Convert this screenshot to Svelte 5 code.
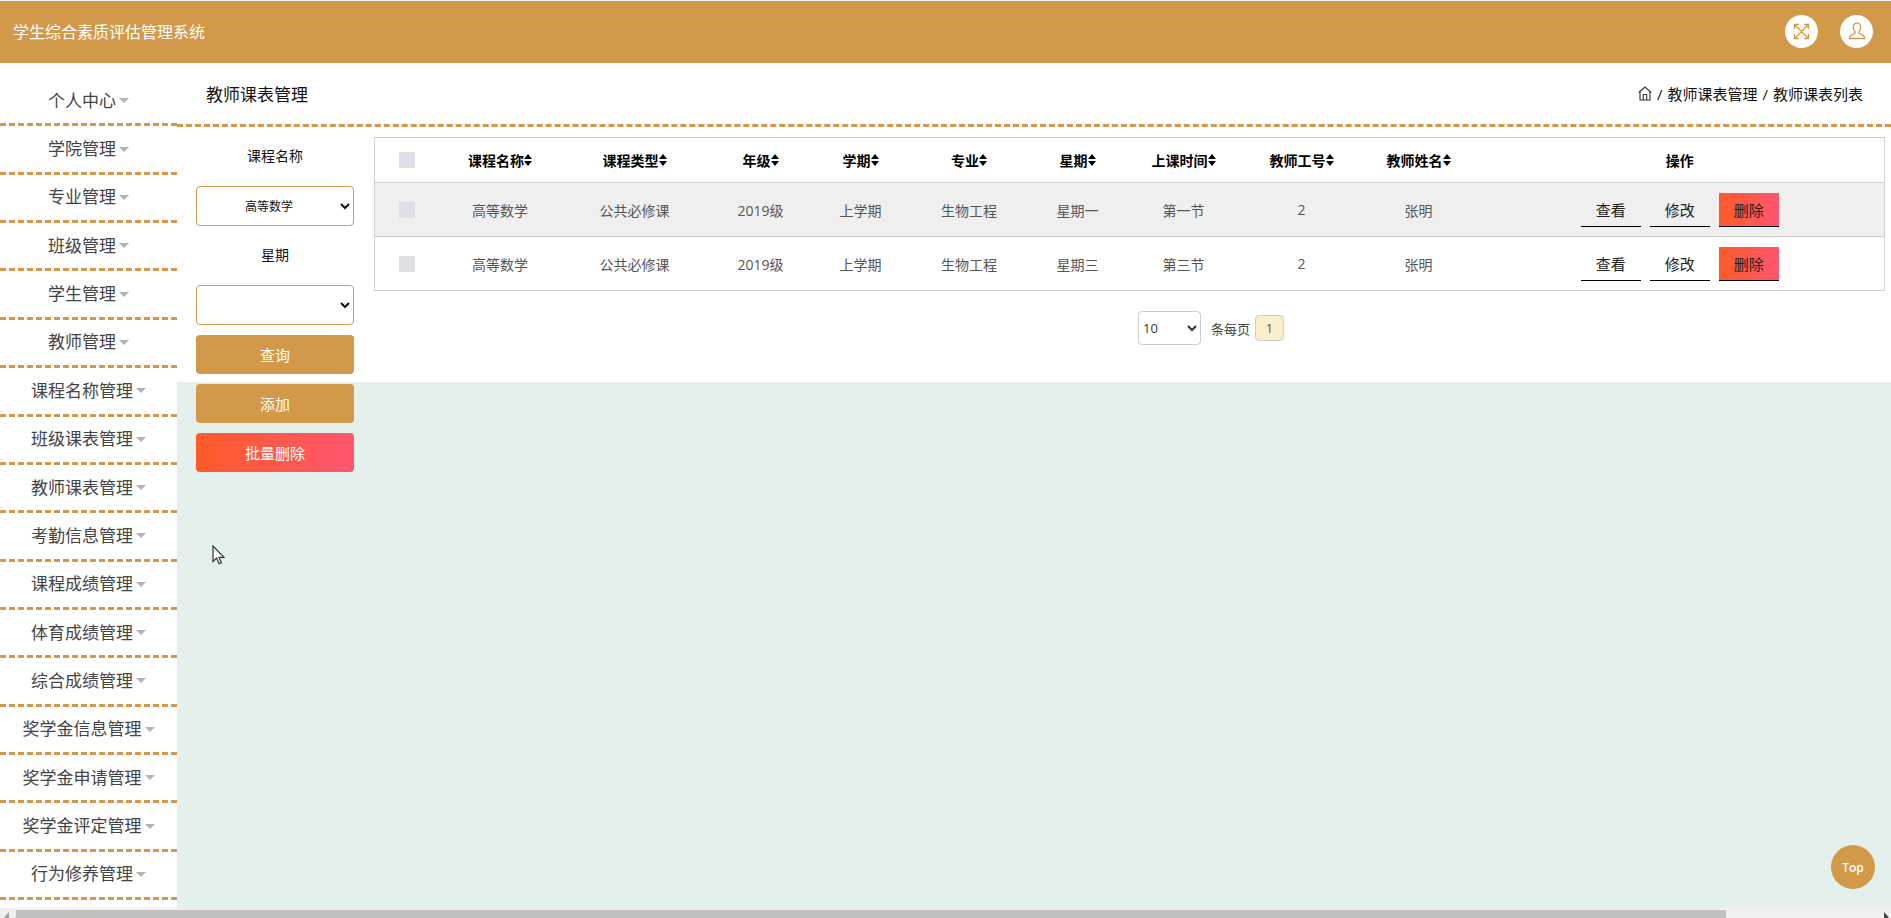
<script>
  const menus = [
    "个人中心",
    "学院管理",
    "专业管理",
    "班级管理",
    "学生管理",
    "教师管理",
    "课程名称管理",
    "班级课表管理",
    "教师课表管理",
    "考勤信息管理",
    "课程成绩管理",
    "体育成绩管理",
    "综合成绩管理",
    "奖学金信息管理",
    "奖学金申请管理",
    "奖学金评定管理",
    "行为修养管理",
  ];

  const columns = [
    { key: "course", title: "课程名称" },
    { key: "type", title: "课程类型" },
    { key: "grade", title: "年级" },
    { key: "term", title: "学期" },
    { key: "major", title: "专业" },
    { key: "weekday", title: "星期" },
    { key: "period", title: "上课时间" },
    { key: "teacherNo", title: "教师工号" },
    { key: "teacher", title: "教师姓名" },
  ];

  const base = {
    course: "高等数学",
    type: "公共必修课",
    grade: "2019级",
    term: "上学期",
    major: "生物工程",
    teacherNo: 2,
    teacher: "张明",
  };

  let rows = [
    { ...base, id: 1, weekday: "星期一", period: "第一节", checked: false },
    { ...base, id: 2, weekday: "星期三", period: "第三节", checked: false },
  ];

  let course = "高等数学";
  let weekday = "";
  let pageSize = 10;

  function toggleAll(e) {
    rows = rows.map((row) => ({ ...row, checked: e.target.checked }));
  }

  function toTop() {
    window.scrollTo({ top: 0, behavior: "smooth" });
  }
</script>

<div class="app">
  <header>
    <h1>学生综合素质评估管理系统</h1>
    <div class="tools">
      <button class="round" aria-label="全屏">
        <svg width="17" height="17" viewBox="0 0 17 17">
          <path d="M1.5 6V1.5H6M11 1.5h4.500V6M15.500 11v4.500H11M6 15.500H1.500V11M1.500 1.500l14 14M15.500 1.500l-14 14" />
        </svg>
      </button>
      <button class="round" aria-label="用户">
        <svg width="18" height="18" viewBox="0 0 18 18">
          <path d="M9 1.200c-2.400 0-3.700 1.800-3.700 4.200 0 1.900.8 3.700 2 4.600.3 1-.2 1.400-1.300 1.800-2.800.9-4.500 2-4.700 4.700h15.400c-.2-2.700-1.900-3.800-4.700-4.700-1.100-.4-1.600-.8-1.300-1.800 1.200-.9 2-2.700 2-4.600 0-2.400-1.300-4.200-3.700-4.200z" />
        </svg>
      </button>
    </div>
  </header>

  <div class="body">
    <nav class="menu">
      {#each menus as menu}
        <a href="#menu">{menu}<i class="caret"></i></a>
      {/each}
    </nav>

    <main>
      <div class="panel">
        <div class="title-bar">
          <h2>教师课表管理</h2>
          <div class="breadcrumb">
            <a href="#home" aria-label="首页">
              <svg width="14" height="15" viewBox="0 0 14 15">
                <path d="M.8 6.500L7 1l6.200 5.500M2 5.800v8.200h10V5.800M5.300 14V8.500h3.400V14" />
              </svg>
            </a>
            <span>/</span>
            <span>教师课表管理</span>
            <span>/</span>
            <span>教师课表列表</span>
          </div>
        </div>

        <form class="filters" on:submit|preventDefault>
          <label for="course">课程名称</label>
          <select id="course" bind:value={course}>
            <option value=""></option>
            <option>高等数学</option>
          </select>
          <label for="weekday">星期</label>
          <select id="weekday" bind:value={weekday}>
            <option value=""></option>
            <option>星期一</option>
            <option>星期三</option>
          </select>
          <button type="submit">查询</button>
          <button type="button">添加</button>
          <button type="button" class="danger">批量删除</button>
        </form>

        <section class="list">
          <table>
            <colgroup>
              <col class="w-check" />
              {#each columns as column}
                <col class="w-{column.key}" />
              {/each}
              <col class="w-actions" />
            </colgroup>
            <thead>
              <tr>
                <th><input type="checkbox" aria-label="全选" on:change={toggleAll} /></th>
                {#each columns as column}
                  <th>
                    <span class="sortable">
                      {column.title}
                      <svg width="8" height="12" viewBox="0 0 8 12">
                        <path d="M4 0l4 5H0zM4 12l4-5H0z" />
                      </svg>
                    </span>
                  </th>
                {/each}
                <th>操作</th>
              </tr>
            </thead>
            <tbody>
              {#each rows as row (row.id)}
                <tr>
                  <td><input type="checkbox" aria-label="选择" bind:checked={row.checked} /></td>
                  {#each columns as column}
                    <td>{row[column.key]}</td>
                  {/each}
                  <td>
                    <div class="actions">
                      <button>查看</button>
                      <button>修改</button>
                      <button class="danger">删除</button>
                    </div>
                  </td>
                </tr>
              {/each}
            </tbody>
          </table>

          <div class="pager">
            <select id="page-size" bind:value={pageSize}>
              <option value={10}>10</option>
              <option value={25}>25</option>
              <option value={50}>50</option>
            </select>
            <label for="page-size">条每页</label>
            <button>1</button>
          </div>
        </section>
      </div>
    </main>
  </div>

  <div class="scrollbar">
    <svg class="left" width="16" height="8" viewBox="0 0 16 8"><path d="M9 2v6H4.500V7z" /></svg>
    <div class="thumb"></div>
    <svg class="right" width="16" height="8" viewBox="0 0 16 8"><path d="M9 2v6h4.500V7z" /></svg>
  </div>

  <button class="top" on:click={toTop}>Top</button>

  <svg class="pointer" width="13" height="20" viewBox="0 0 13 20">
    <path d="M1 1v15.500l3.600-3.400 2.500 5.600 2.300-1-2.400-5.400H12z" />
  </svg>
</div>

<style>
  :global(body) {
    background: #e4f0eb;
  }

  .app {
    --gold: #d19949;
    --danger: linear-gradient(90deg, #ff5b29, #ff5670);
    display: flex;
    flex-direction: column;
    min-height: 100vh;
    font-family: "Open Sans", "Noto Sans CJK SC", sans-serif;
    color: #111;
  }

  button,
  select,
  input {
    font-family: inherit;
    box-sizing: border-box;
    margin: 0;
  }

  button {
    border: 0;
    padding: 0;
    cursor: pointer;
  }

  a {
    color: inherit;
    text-decoration: none;
  }

  h1,
  h2 {
    margin: 0;
    font-weight: 400;
  }

  header {
    display: flex;
    align-items: center;
    justify-content: space-between;
    height: 60px;
    padding: 0 18px 2px 13px;
    border-top: 1px solid #f0eef0;
    background: var(--gold);
    color: #fff;
  }

  h1 {
    font-size: 16px;
  }

  .tools {
    display: flex;
    gap: 22px;
  }

  .round {
    display: grid;
    place-items: center;
    width: 33px;
    height: 33px;
    border-radius: 50%;
    background: #fff;
  }

  .round path {
    fill: none;
    stroke: var(--gold);
    stroke-width: 1.3;
  }

  .body {
    flex: 1;
    display: flex;
  }

  .menu {
    display: flex;
    flex-direction: column;
    flex: none;
    box-sizing: border-box;
    width: 177px;
    padding: 15px 0 8px;
    background: #fff;
  }

  .menu a {
    flex: 1;
    display: flex;
    align-items: center;
    justify-content: center;
    gap: 3px;
    border-bottom: 3px dashed var(--gold);
    font-size: 17px;
    line-height: 24px;
    color: #444;
  }

  .caret {
    border: 5px solid transparent;
    border-top-color: #b3b3b3;
    border-bottom: 0;
  }

  main {
    flex: 1;
    min-width: 0;
  }

  .panel {
    background: #fff;
  }

  .title-bar {
    display: flex;
    align-items: center;
    justify-content: space-between;
    height: 61px;
    padding: 0 28px 0 29px;
    border-bottom: 3px dashed var(--gold);
  }

  h2 {
    font-size: 17px;
  }

  .breadcrumb {
    display: flex;
    align-items: center;
    gap: 5px;
    font-size: 15px;
  }

  .breadcrumb a {
    display: flex;
  }

  .breadcrumb path {
    fill: none;
    stroke: #333;
    stroke-width: 1.1;
  }

  /* floated so the buttons can run past the white panel */
  .filters {
    float: left;
    display: flex;
    flex-direction: column;
    gap: 10px;
    width: 158px;
    padding: 10px 20px 0 19px;
  }

  .filters label {
    height: 39px;
    line-height: 38px;
    text-align: center;
    font-size: 14px;
  }

  .filters select {
    height: 40px;
    border: 1px solid var(--gold);
    border-radius: 4px;
    background: #fff;
    text-align: center;
    font-size: 12px;
    color: #111;
  }

  .filters button {
    height: 39px;
    border-radius: 4px;
    background: var(--gold);
    font-size: 15px;
    color: #fff;
  }

  .filters .danger {
    background: var(--danger);
  }

  .list {
    overflow: hidden;
    padding: 10px 7px 37px 0;
  }

  table {
    width: 100%;
    table-layout: fixed;
    border-collapse: collapse;
    border: 1px solid #d0d0d0;
    font-size: 14px;
    text-align: center;
  }

  .w-check { width: 65px; }
  .w-course { width: 121px; }
  .w-type { width: 148px; }
  .w-grade { width: 104px; }
  .w-term { width: 96px; }
  .w-major { width: 121px; }
  .w-weekday { width: 96px; }
  .w-period { width: 116px; }
  .w-teacherNo { width: 120px; }
  .w-teacher { width: 114px; }
  .w-actions { width: 409px; }

  th,
  td {
    padding: 0;
    border-bottom: 1px solid #d0d0d0;
  }

  th {
    height: 44px;
    font-weight: 700;
    color: #000;
  }

  td {
    height: 53px;
    color: #555;
  }

  tbody tr:nth-child(odd) {
    background: #efefef;
  }

  .sortable {
    display: inline-flex;
    align-items: center;
  }

  input[type="checkbox"] {
    appearance: none;
    display: block;
    width: 16px;
    height: 16px;
    margin: 0 auto;
    background: #dddfe5;
  }

  input[type="checkbox"]:checked {
    background: var(--gold);
  }

  .actions {
    display: flex;
    justify-content: center;
    gap: 9px;
  }

  .actions button {
    width: 60px;
    height: 34px;
    border-bottom: 1px solid #000;
    background: none;
    font-size: 15px;
    color: #222;
  }

  .actions .danger {
    background: var(--danger);
  }

  .pager {
    display: flex;
    align-items: center;
    justify-content: center;
    padding: 20px 0 0 164px;
    font-size: 13px;
    color: #444;
  }

  .pager select {
    width: 63px;
    height: 34px;
    border: 1px solid #ccc;
    border-radius: 4px;
    background: #fff;
    font-size: 13px;
    color: #333;
  }

  .pager label {
    margin: 0 5px 0 10px;
  }

  .pager button {
    width: 29px;
    height: 26px;
    border: 1px solid #ccc;
    border-radius: 4px;
    background: #fbefcb;
    font-size: 13px;
    color: #6b5a2a;
  }

  .scrollbar {
    display: flex;
    align-items: flex-end;
    height: 10px;
    background: #f0f0f0;
  }

  .scrollbar .left {
    fill: #a0a0a0;
  }

  .scrollbar .right {
    margin-left: auto;
    fill: #444;
  }

  .thumb {
    width: calc(100% - 181px);
    height: 8px;
    background: #c1bfbf;
  }

  .top {
    position: fixed;
    right: 16px;
    bottom: 29px;
    width: 44px;
    height: 44px;
    border-radius: 50%;
    background: var(--gold);
    font-size: 12px;
    font-weight: 600;
    color: #fff;
  }

  .pointer {
    position: absolute;
    left: 212px;
    top: 545px;
    fill: #fff;
    stroke: #333;
    stroke-width: 1.2;
    pointer-events: none;
  }
</style>
